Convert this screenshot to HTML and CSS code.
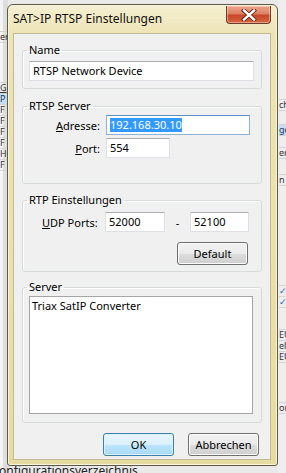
FILE: index.html
```html
<!DOCTYPE html>
<html lang="de">
<head>
    <meta charset="UTF-8">
    <meta name="viewport" content="width=device-width, initial-scale=1.0">
    <title>SAT&gt;IP RTSP Einstellungen</title>
    <link rel="stylesheet" href="styles.css">
</head>
<body>
    <!-- application window behind the dialog -->
    <div class="app">
        <div class="app-side app-left">
            <span class="row" style="height: 32px"></span>
            <span class="row">er</span>
            <span class="row" style="height: 40px"></span>
            <span class="row"><u>G</u></span>
            <span class="row hl">P</span>
            <span class="row">F</span>
            <span class="row">F</span>
            <span class="row">F</span>
            <span class="row">F</span>
            <span class="row">H</span>
            <span class="row">F</span>
        </div>
        <div class="app-mid"></div>
        <div class="app-side app-right">
            <span class="row" style="height: 100px"></span>
            <span class="row">ch</span>
            <span class="row" style="height: 14px"></span>
            <span class="row hl">ge</span>
            <span class="row" style="height: 12px"></span>
            <span class="row">er</span>
            <span class="row" style="height: 16px"></span>
            <span class="row">n</span>
            <span class="row" style="height: 100px"></span>
            <span class="row check">&#10003;</span>
            <span class="row check">&#10003;</span>
            <span class="row" style="height: 22px"></span>
            <span class="row">EU</span>
            <span class="row">el</span>
            <span class="row">EU</span>
            <span class="row" style="height: 40px"></span>
            <span class="row">or</span>
        </div>
        <div class="app-bottom">onfigurationsverzeichnis</div>
    </div>

    <div class="dialog">
        <div class="titlebar">
            <span class="title">SAT&gt;IP RTSP Einstellungen</span>
            <span class="close">
                <svg width="16" height="12" viewBox="0 0 16 12">
                    <path d="M3 1.5 L13 10.5 M13 1.5 L3 10.5" stroke="#5a2418" stroke-width="4.2" stroke-linecap="square"/>
                    <path d="M3 1.5 L13 10.5 M13 1.5 L3 10.5" stroke="#fff" stroke-width="2.4" stroke-linecap="square"/>
                </svg>
            </span>
        </div>

        <div class="client">
            <fieldset class="group">
                <legend>Name</legend>
                <div class="edit name-edit">RTSP Network Device</div>
            </fieldset>

            <fieldset class="group rtsp">
                <legend>RTSP Server</legend>
                <div class="field">
                    <label><u>A</u>dresse:</label>
                    <div class="edit addr-edit focused"><span class="sel">192.168.30.10</span></div>
                </div>
                <div class="field">
                    <label><u>P</u>ort:</label>
                    <div class="edit port-edit">554</div>
                </div>
            </fieldset>

            <fieldset class="group rtp">
                <legend>RTP Einstellungen</legend>
                <div class="field">
                    <label class="udp"><u>U</u>DP Ports:</label>
                    <div class="edit udp-edit">52000</div>
                    <span class="dash">-</span>
                    <div class="edit udp-edit2">52100</div>
                </div>
                <div class="default-row">
                    <button class="btn">Default</button>
                </div>
            </fieldset>

            <fieldset class="group server">
                <legend>Server</legend>
                <div class="listbox">
                    <div class="item">Triax SatIP Converter</div>
                </div>
            </fieldset>

            <div class="buttons">
                <button class="btn primary">OK</button>
                <button class="btn">Abbrechen</button>
            </div>
        </div>
    </div>
</body>
</html>
```

FILE: styles.css
```css
* {
    box-sizing: border-box;
}

:root {
    --ui-font: "Noto Sans", "DejaVu Sans", sans-serif;
    --face: #f0f0f0;
    --group-line: #d5dadd;
}

body {
    margin: 0;
    font-family: var(--ui-font);
    font-size: 11px;
    color: #000;
    background: #dcdcdc;
}

/* background window */
.app {
    position: relative;
    width: 286px;
    height: 473px;
    display: flex;
    overflow: hidden;
    background: #e9e9e9;
}

.app-side {
    display: flex;
    flex-direction: column;
    font-size: 9px;
    line-height: 10px;
    color: #333;
}

.app-left {
    width: 8px;
    background: linear-gradient(90deg, #f4f4f4 0 3px, #dedede 3px);
}

.app-right {
    width: 8px;
    padding-left: 1px;
    background: #eeeeee;
}

.app-side .row {
    display: block;
    flex: none;
    height: 11px;
    white-space: nowrap;
    overflow: hidden;
    border-bottom: 1px solid #d4d4d4;
}

.app-side .row.hl {
    background: #c6def4;
    color: #1a3c66;
}

.app-side .row.check {
    color: #2b5fb3;
    font-weight: bold;
}

.app-mid {
    flex: 1;
}

.app-bottom {
    position: absolute;
    left: -1px;
    top: 464px;
    font-size: 12px;
    line-height: 14px;
    color: #222;
}

/* dialog window */
.dialog {
    position: absolute;
    left: 7px;
    top: 4px;
    width: 271px;
    height: 462px;
    display: flex;
    flex-direction: column;
    padding: 0 6px 5px 5px;
    border: 1px solid #5e5a44;
    border-radius: 6px 6px 3px 3px;
    background: linear-gradient(180deg, #f5efd2 0%, #ede4b4 30px, #e7dc9f 100%);
    box-shadow: inset 0 0 0 1px #f8f3dc;
}

.titlebar {
    height: 28px;
    display: flex;
    align-items: flex-start;
}

.title {
    margin-top: 6px;
    font-size: 12px;
    line-height: 16px;
    color: #111;
}

.close {
    margin-left: auto;
    margin-top: 1px;
    width: 45px;
    height: 18px;
    display: flex;
    align-items: center;
    justify-content: center;
    border: 1px solid #6d3a2c;
    border-top: none;
    border-radius: 0 0 4px 4px;
    background: linear-gradient(180deg, #eba58d 0%, #de8162 45%, #c8462a 55%, #d4663f 100%);
    box-shadow: inset 0 0 0 1px rgba(255, 220, 200, 0.5);
}

.client {
    flex: 1;
    padding: 8px 8px 0 8px;
    background: var(--face);
    border: 1px solid #c3bb93;
}

.group {
    margin: 0;
    padding: 0 6px 7px 6px;
    min-width: 0;
    border: 1px solid var(--group-line);
    border-radius: 3px;
    box-shadow: inset 1px 1px 0 #fff;
}

.group legend {
    margin-left: -2px;
    padding: 0 2px;
    line-height: 16px;
}

.rtsp {
    margin-top: 9px;
    padding-bottom: 25px;
}

.rtp {
    margin-top: 8px;
    padding-bottom: 6px;
}

.server {
    margin-top: 7px;
    padding-bottom: 8px;
}

.edit {
    height: 20px;
    padding: 0 3px;
    line-height: 18px;
    background: #fff;
    border: 1px solid #dde1e6;
    border-top-color: #abadb3;
    white-space: nowrap;
    overflow: hidden;
}

.edit.focused {
    border-color: #8db2d9;
    border-top-color: #5c8fc4;
}

.edit .sel {
    display: inline-block;
    line-height: 14px;
    background: #3399ff;
    color: #fff;
}

.name-edit {
    margin-top: 3px;
    width: 225px;
}

.field {
    display: flex;
    align-items: center;
    margin-top: 3px;
}

.rtsp .field:first-of-type {
    margin-top: 1px;
}

.field label {
    width: 71px;
    margin-right: 6px;
    text-align: right;
}

.field label.udp {
    width: 76px;
    margin-right: 0;
    padding-left: 13px;
    text-align: left;
}

.rtp .field {
    margin-top: 4px;
}

.addr-edit {
    width: 144px;
}

.port-edit {
    width: 64px;
}

.udp-edit {
    width: 60px;
}

.dash {
    width: 25px;
    text-align: center;
}

.udp-edit2 {
    width: 59px;
}

.default-row {
    display: flex;
    justify-content: flex-end;
    margin-top: 10px;
    padding-right: 7px;
}

.listbox {
    margin-top: 1px;
    width: 224px;
    height: 118px;
    padding: 1px 2px;
    background: #fff;
    border: 1px solid #a5a5a5;
}

.listbox .item {
    line-height: 16px;
}

.btn {
    width: 71px;
    height: 23px;
    padding: 0;
    font: inherit;
    color: #000;
    border: 1px solid #707070;
    border-radius: 3px;
    background: linear-gradient(180deg, #f2f2f2 0%, #ebebeb 50%, #dddddd 50%, #cfcfcf 100%);
    box-shadow: inset 0 0 0 1px #fcfcfc;
}

.btn.primary {
    border-color: #3c7fb1;
    background: linear-gradient(180deg, #eaf6fd 0%, #d9f0fc 50%, #bee6fd 50%, #a7d9f5 100%);
    box-shadow: inset 0 0 0 1px #def2fc;
}

.buttons {
    display: flex;
    justify-content: flex-end;
    gap: 14px;
    margin-top: 10px;
    padding-right: 3px;
}
```
